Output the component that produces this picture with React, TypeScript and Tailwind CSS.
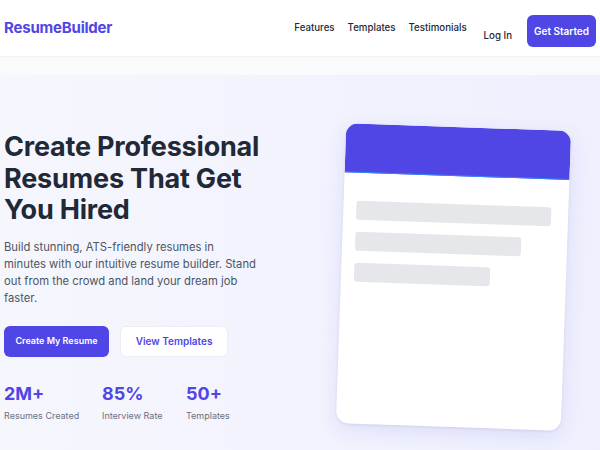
export default function App() {
  return (
    <div className="min-h-[450px] w-[600px] overflow-hidden bg-[#f9fafb]" style={{ fontFamily: "Inter, 'Noto Sans', sans-serif" }}>
      <nav className="flex h-[57px] items-center justify-between border-b border-[#f0f2f4] bg-white pl-1 pr-1">
        <div className="text-[15px] font-bold tracking-[-0.2px] text-[#4f46e5]">ResumeBuilder</div>
        <div className="flex items-center pt-[6px]">
          <div className="-mt-[6px] flex items-center gap-[13px] text-[9.7px] font-medium text-[#1f2937]">
            <span>Features</span>
            <span>Templates</span>
            <span>Testimonials</span>
          </div>
          <span className="ml-[17px] mt-[10px] text-[9.7px] font-medium text-[#1f2937]">Log In</span>
          <button className="ml-[15px] h-[32px] w-[69px] rounded-md bg-[#4f46e5] text-[10px] font-semibold text-white">Get Started</button>
        </div>
      </nav>
      <div className="h-[18px]" />
      <section className="bg-gradient-to-r from-[#f6f6fd] to-[#eef0fd] pt-[52px] pb-10">
        <div className="grid grid-cols-[302px_1fr] items-start pl-1">
          <div className="mt-[4px]">
            <h1 className="text-[27px] font-bold leading-[31.5px] tracking-[-0.2px] text-[#1f2937]">
              Create Professional
              <br />
              Resumes That Get
              <br />
              You Hired
            </h1>
            <p className="mt-[13px] whitespace-nowrap text-[11.25px] leading-[17.3px] text-[#4b5563]">
              Build stunning, ATS-friendly resumes in
              <br />
              minutes with our intuitive resume builder. Stand
              <br />
              out from the crowd and land your dream job
              <br />
              faster.
            </p>
            <div className="mt-[18px] flex gap-[11px]">
              <button className="h-[31px] w-[105px] rounded-md bg-[#4f46e5] text-[9px] font-semibold text-white">Create My Resume</button>
              <button className="h-[31px] w-[108px] rounded-md border border-[#eceef2] bg-white text-[10px] font-semibold text-[#4f46e5]">View Templates</button>
            </div>
            <div className="mt-[25px] flex">
              <div className="w-[98px]">
                <div className="text-[18px] font-bold leading-6 text-[#4f46e5]">2M+</div>
                <div className="mt-[3px] text-[9px] text-[#6b7280]">Resumes Created</div>
              </div>
              <div className="w-[84px]">
                <div className="text-[18px] font-bold leading-6 text-[#4f46e5]">85%</div>
                <div className="mt-[3px] text-[9px] text-[#6b7280]">Interview Rate</div>
              </div>
              <div>
                <div className="text-[18px] font-bold leading-6 text-[#4f46e5]">50+</div>
                <div className="mt-[3px] text-[9px] text-[#6b7280]">Templates</div>
              </div>
            </div>
          </div>
          <div className="flex justify-center">
            <div className="h-[300px] w-[225px] rotate-[2deg] overflow-hidden rounded-xl bg-white shadow-[0_6px_20px_rgba(79,70,229,0.12),0_1px_3px_rgba(0,0,0,0.08)]">
              <div className="h-[49px] border-b border-[#3b82f6] bg-[#4f46e5]" />
              <div className="px-[13px] pt-[28px]">
                <div className="h-[19px] w-[195px] rounded-[3px] bg-[#e5e7eb]" />
                <div className="mt-[12px] h-[19px] w-[166px] rounded-[3px] bg-[#e5e7eb]" />
                <div className="mt-[12px] h-[19px] w-[136px] rounded-[3px] bg-[#e5e7eb]" />
              </div>
            </div>
          </div>
        </div>
      </section>
    </div>
  );
}
